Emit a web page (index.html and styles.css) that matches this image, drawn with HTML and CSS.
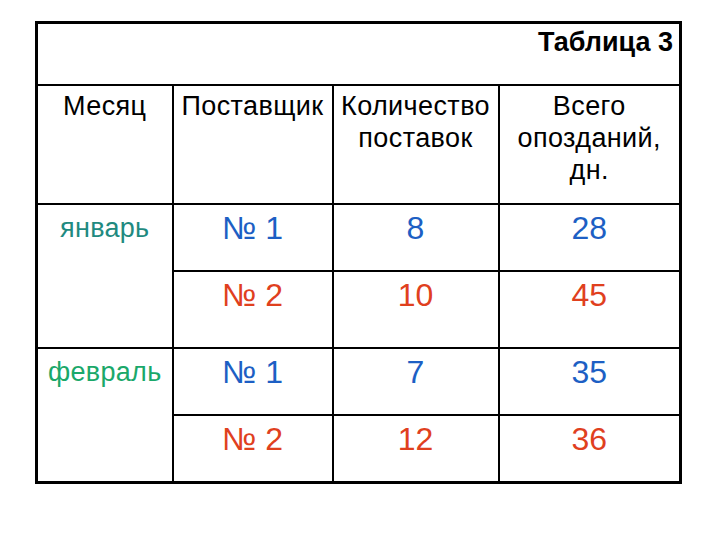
FILE: index.html
```html
<!DOCTYPE html>
<html lang="ru">
<head>
<meta charset="utf-8">
<link rel="stylesheet" href="styles.css">
</head>
<body>
<table class="report">
  <colgroup>
    <col class="c-month">
    <col class="c-supplier">
    <col class="c-count">
    <col class="c-delay">
  </colgroup>
  <tr class="r-title">
    <td colspan="4" class="title">Таблица 3</td>
  </tr>
  <tr class="r-head">
    <td>Месяц</td>
    <td>Поставщик</td>
    <td>Количество<br>поставок</td>
    <td>Всего<br>опозданий,<br>дн.</td>
  </tr>
  <tr class="r-data">
    <td rowspan="2" class="month jan">январь</td>
    <td class="num blue">№ 1</td>
    <td class="num blue">8</td>
    <td class="num blue">28</td>
  </tr>
  <tr class="r-data tall">
    <td class="num red">№ 2</td>
    <td class="num red">10</td>
    <td class="num red">45</td>
  </tr>
  <tr class="r-data">
    <td rowspan="2" class="month feb">февраль</td>
    <td class="num blue">№ 1</td>
    <td class="num blue">7</td>
    <td class="num blue">35</td>
  </tr>
  <tr class="r-data">
    <td class="num red">№ 2</td>
    <td class="num red">12</td>
    <td class="num red">36</td>
  </tr>
</table>
</body>
</html>
```

FILE: styles.css
```css
html, body {
  margin: 0;
  padding: 0;
  background: #ffffff;
}

body {
  font-family: "Liberation Sans", Arial, sans-serif;
  color: #000000;
}

.report {
  margin: 21px 0 0 35px;
  width: 647px;
  border-collapse: collapse;
  table-layout: fixed;
  border: 3px solid #000000;
}

.c-month { width: 136px; }
.c-supplier { width: 160px; }
.c-count { width: 166px; }
.c-delay { width: 182px; }

.report td {
  border: 2px solid #000000;
  vertical-align: top;
  text-align: center;
  padding: 0;
}

.r-title td { height: 57px; }
.r-head td { height: 113px; }
.r-data td { height: 60px; }
.r-data.tall td { height: 70px; }

.title {
  text-align: right !important;
  font-weight: bold;
  font-size: 27px;
  padding: 3px 6px 0 0 !important;
}

.r-head td {
  font-size: 27px;
  letter-spacing: 0.4px;
  line-height: 32px;
  padding-top: 4px;
}

.month {
  font-size: 27px;
  letter-spacing: 0.3px;
  padding-top: 8px !important;
}

.jan { color: #1f8a80; }
.feb { color: #1aa86a; }

.num {
  font-size: 32px;
  padding-top: 5px !important;
}

.blue { color: #1d5fc4; }
.red { color: #e0401e; }
```
